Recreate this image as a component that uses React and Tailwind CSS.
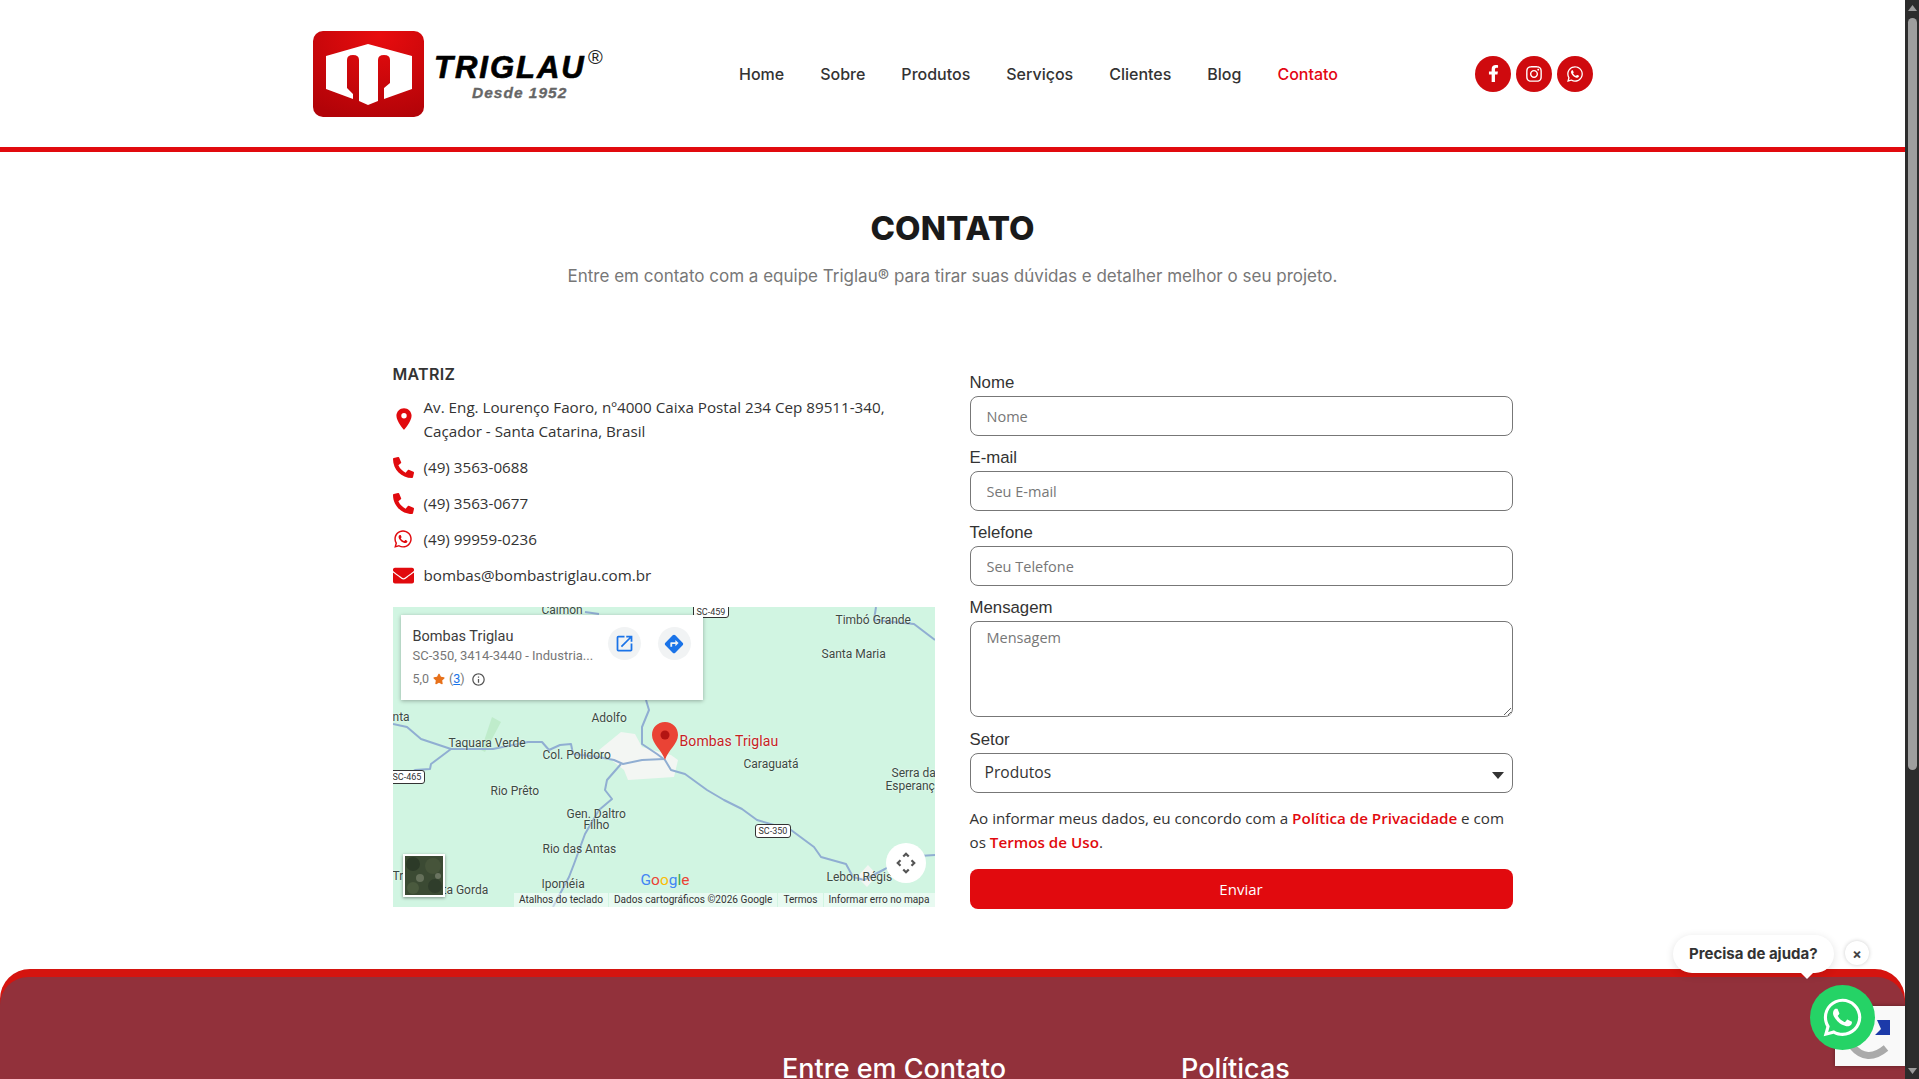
import React from 'react'
import { FaFacebookF, FaInstagram, FaWhatsapp, FaPhoneAlt, FaEnvelope, FaStar } from 'react-icons/fa'
import { MdOutlineOpenInNew, MdDirections, MdInfoOutline, MdPlace } from 'react-icons/md'

const nav = ['Home', 'Sobre', 'Produtos', 'Serviços', 'Clientes', 'Blog']

const fields = [
    { label: 'Nome', placeholder: 'Nome' },
    { label: 'E-mail', placeholder: 'Seu E-mail' },
    { label: 'Telefone', placeholder: 'Seu Telefone' },
]

const mapLabels = [
    { text: 'Calmon', x: 149, y: -3 },
    { text: 'Timbó Grande', x: 443, y: 7 },
    { text: 'Santa Maria', x: 429, y: 41 },
    { text: 'nta', x: 0, y: 104 },
    { text: 'Adolfo', x: 199, y: 105 },
    { text: 'Taquara Verde', x: 56, y: 130 },
    { text: 'Col. Polidoro', x: 150, y: 142 },
    { text: 'Caraguatá', x: 351, y: 151 },
    { text: 'Serra da', x: 499, y: 160 },
    { text: 'Esperanç', x: 493, y: 173 },
    { text: 'Rio Prêto', x: 98, y: 178 },
    { text: 'Gen. Daltro', x: 174, y: 201 },
    { text: 'Filho', x: 191, y: 212 },
    { text: 'Rio das Antas', x: 150, y: 236 },
    { text: 'Tr', x: 0, y: 263 },
    { text: 'Lebon Régis', x: 434, y: 264 },
    { text: 'Ipoméia', x: 149, y: 271 },
    { text: 'ta Gorda', x: 50, y: 277 },
]

function Logo() {
    return (
        <div className="flex items-center">
            <svg width="111" height="86" viewBox="0 0 111 86" className="shrink-0">
                <defs>
                    <radialGradient id="logoRed" cx="0.6" cy="0.05" r="1">
                        <stop offset="0" stopColor="#e80c0e" />
                        <stop offset="1" stopColor="#b20308" />
                    </radialGradient>
                </defs>
                <rect width="111" height="86" rx="10" fill="url(#logoRed)" />
                <path d="M13 25 L55 13 L99 25 L99 58 L71 68 L71 57 L77 52 L77 29 Q77 24 71 24 Q65 24 65 29 L65 70 L55 74 L46 70 L46 29 Q46 24 40 24 Q34 24 34 29 L34 57 L40 63 L40 68 L13 58 Z" fill="#fff" />
            </svg>
            <div className="relative ml-[11px] w-[180px] h-[86px]">
                <span className="absolute left-[-1px] top-[19px] font-['Liberation_Sans',sans-serif] font-bold italic text-[31px] leading-[36px] tracking-[2px] text-black [-webkit-text-stroke:0.7px_#000]">TRIGLAU</span>
                <span className="absolute left-[153px] top-[15px] font-['Liberation_Sans',sans-serif] text-[20px] leading-[22px] text-[#222]">®</span>
                <span className="absolute left-[37px] top-[53px] font-['Liberation_Sans',sans-serif] font-bold italic text-[15.5px] leading-[18px] tracking-[1px] text-[#666] [-webkit-text-stroke:0.3px_#666]">Desde 1952</span>
            </div>
        </div>
    )
}

function Header() {
    return (
        <header className="h-[152px] border-b-[5px] border-[#e10a0e] bg-white">
            <div className="ml-[313px] w-[1280px] flex items-center h-[147px]">
                <Logo />
                <nav className="flex items-center gap-[36px] ml-[124px] font-['Inter',sans-serif] text-[16px] font-medium text-[#333]">
                    {nav.map((n) => <a key={n}>{n}</a>)}
                    <a className="text-[#e30613]">Contato</a>
                </nav>
                <div className="flex gap-[5px] ml-auto">
                    <span className="w-9 h-9 rounded-full bg-[#cf0a0e] flex items-center justify-center text-white"><FaFacebookF size={17} /></span>
                    <span className="w-9 h-9 rounded-full bg-[#cf0a0e] flex items-center justify-center text-white"><FaInstagram size={18} /></span>
                    <span className="w-9 h-9 rounded-full bg-[#cf0a0e] flex items-center justify-center text-white"><FaWhatsapp size={18} /></span>
                </div>
            </div>
        </header>
    )
}

function ContactRow({ icon, children }) {
    return (
        <div className="flex items-center">
            <span className="w-[31px] shrink-0 text-[#e10a0e]">{icon}</span>
            <p className="leading-6">{children}</p>
        </div>
    )
}

function MapEmbed() {
    return (
        <div className="relative w-[542px] h-[300px] bg-[#d1f5e2] overflow-hidden font-['Roboto',sans-serif]">
            <svg width="542" height="300" viewBox="0 0 542 300" className="absolute inset-0">
                <path d="M88 143 L99 110 L108 115 L92 145 Z" fill="#bfeccb" />
                <path d="M206 143 L228 125 L242 127 L249 140 L278 148 L285 153 L281 170 L235 173 L231 163 Z" fill="#f3f6f3" />
                <path d="M464 270 L475 258 L484 268 L474 280 Z" fill="#f3f6f3" />
                <g fill="none" stroke="#90aed2" strokeWidth="2" strokeLinejoin="round">
                    <path d="M0 117 L14 120 L28 132 L46 138 L58 142 L38 157 L37 162 L22 163 L10 170" />
                    <path d="M58 142 L100 142 L135 135 L149 135 L156 143 L167 138 L178 137 L180 147 L206 150 L221 153 L230 157 L249 153 L271 152" />
                    <path d="M228 157 L214 173 L212 183 L219 192 L206 203 L192 227 L181 257 L176 270 L160 300" />
                    <path d="M253 93 L256 103 L249 120 L249 137 L264 147 L272 153 L278 163 L292 167 L314 183 L331 193 L349 202 L364 213 L398 223 L421 240 L428 250 L453 257 L460 270" />
                    <path d="M460 270 L471 273 L492 262 L510 250 L542 248" />
                    <path d="M483 0 L481 13 L521 17 L542 33" />
                    <path d="M192 5 L206 7" />
                </g>
            </svg>

            {mapLabels.map((l) => (
                <span key={l.text} className="absolute text-[12px] leading-[13px] text-[#3c4a43] whitespace-nowrap [text-shadow:0_0_2px_#fff]" style={{ left: l.x, top: l.y }}>{l.text}</span>
            ))}
            <span className="absolute left-[-4px] top-[163px] h-[14px] px-[3px] rounded-[3px] border border-[#333] bg-white text-[9px] leading-[12px] text-[#333]">SC-465</span>
            <span className="absolute left-[362px] top-[217px] h-[14px] px-[3px] rounded-[3px] border border-[#333] bg-white text-[9px] leading-[12px] text-[#333]">SC-350</span>
            <span className="absolute left-[300px] top-[-3px] h-[14px] px-[3px] rounded-[3px] border border-[#333] bg-white text-[9px] leading-[14px] text-[#333]">SC-459</span>

            {/* pin */}
            <svg width="26" height="38" viewBox="0 0 26 38" className="absolute left-[259px] top-[115px]">
                <path d="M13 0 C5.5 0 0 5.5 0 13 C0 22 10 28 13 38 C16 28 26 22 26 13 C26 5.5 20.5 0 13 0 Z" fill="#ea4335" />
                <circle cx="13" cy="13" r="4.5" fill="#b31412" />
            </svg>
            <span className="absolute left-[287px] top-[126px] text-[14px] leading-[16px] tracking-[0.1px] text-[#c5221f] [text-shadow:0_0_2px_#fff]">Bombas Triglau</span>

            {/* place card */}
            <div className="absolute left-2 top-2 w-[302px] h-[85px] bg-white shadow-[0_1px_4px_rgba(0,0,0,0.3)] pl-3 pt-[13px]">
                <p className="text-[14.5px] leading-[18px] font-normal text-[#3c3c3c]">Bombas Triglau</p>
                <p className="text-[13px] leading-[16px] mt-[2px] text-[#777]">SC-350, 3414-3440 - Industria...</p>
                <div className="flex items-center mt-[7px] text-[12.5px] leading-[16px] text-[#777]">
                    5,0 <FaStar size={12} className="text-[#e7711b] mx-[4px]" /> (<span className="text-[#1a73e8] underline">3</span>)
                    <MdInfoOutline size={15} className="text-[#555] ml-[6px]" />
                </div>
                <span className="absolute left-[207px] top-[12px] w-[33px] h-[33px] rounded-full bg-[#f1f3f4] flex items-center justify-center text-[#1a73e8]"><MdOutlineOpenInNew size={21} /></span>
                <span className="absolute left-[257px] top-[12px] w-[33px] h-[33px] rounded-full bg-[#f1f3f4] flex items-center justify-center text-[#1a73e8]"><MdDirections size={22} /></span>
            </div>

            {/* satellite thumb */}
            <div className="absolute left-[10px] top-[247px] w-[42px] h-[43px] border-2 border-white bg-[#3b4a33] shadow-[0_1px_3px_rgba(0,0,0,0.4)] overflow-hidden">
                <svg width="38" height="39" viewBox="0 0 38 39">
                    <circle cx="8" cy="8" r="7" fill="#2c3a28" />
                    <circle cx="28" cy="10" r="8" fill="#46543a" />
                    <circle cx="15" cy="22" r="4" fill="#65705a" />
                    <circle cx="30" cy="30" r="7" fill="#2f3d2b" />
                    <circle cx="8" cy="32" r="6" fill="#4a5a3e" />
                    <circle cx="33" cy="20" r="3" fill="#6a7460" />
                </svg>
            </div>

            {/* expand */}
            <div className="absolute left-[493px] top-[236px] w-10 h-10 rounded-full bg-white flex items-center justify-center">
                <svg width="20" height="22" viewBox="0 0 20 24" fill="none" stroke="#555" strokeWidth="2.4">
                    <path d="M7 5 L10 2 L13 5" /><path d="M7 19 L10 22 L13 19" /><path d="M4 9 L1 12 L4 15" /><path d="M16 9 L19 12 L16 15" />
                </svg>
            </div>

            <span className="absolute left-[248px] top-[264px] text-[15.5px] leading-[18px] text-[#4285f4]">G<span className="text-[#ea4335]">o</span><span className="text-[#fbbc05]">o</span>g<span className="text-[#34a853]">l</span><span className="text-[#ea4335]">e</span></span>

            <div className="absolute right-0 bottom-0 h-[14px] flex items-center gap-px text-[10.1px] leading-[14px] text-[#333] whitespace-nowrap">
                <span className="px-[5px] bg-white/50">Atalhos do teclado</span>
                <span className="px-[5px] bg-white/50">Dados cartográficos ©2026 Google</span>
                <span className="px-[5px] bg-white/50">Termos</span>
                <span className="px-[5px] bg-white/50">Informar erro no mapa</span>
            </div>
        </div>
    )
}

function Field({ label, children }) {
    return (
        <div>
            <label className="block pb-[2px] font-['Liberation_Sans',sans-serif] text-[16.8px] leading-[23px] text-[#333]">{label}</label>
            {children}
        </div>
    )
}

function ContactForm() {
    return (
        <form className="w-[543px] pt-[9px] font-['Open_Sans',sans-serif]">
            <div className="flex flex-col gap-[10px]">
                {fields.map((f) => (
                    <Field key={f.label} label={f.label}>
                        <input placeholder={f.placeholder} className="block w-full h-10 px-4 rounded-lg border border-[#777] bg-white text-[14.5px] text-[#555] placeholder:text-[#777] outline-none" />
                    </Field>
                ))}
                <Field label="Mensagem">
                    <textarea placeholder="Mensagem" className="block w-full h-[96px] px-4 py-[5px] rounded-lg border border-[#777] bg-white text-[14.5px] placeholder:text-[#777] outline-none" />
                </Field>
                <div className="mt-px">
                    <Field label="Setor">
                        <div className="relative h-10 px-[14px] rounded-lg border border-[#777] flex items-center text-[15.6px] text-[#333]">
                            Produtos
                            <svg width="12" height="7" viewBox="0 0 12 7" className="absolute right-[8px] top-[18px]"><path d="M0 0 H12 L6 7 Z" fill="#333" /></svg>
                        </div>
                    </Field>
                </div>
            </div>
            <p className="mt-[13px] text-[15.2px] leading-6 text-[#333]">
                Ao informar meus dados, eu concordo com a <b className="font-semibold text-[#e10a0e]">Política de Privacidade</b> e com os <b className="font-semibold text-[#e10a0e]">Termos de Uso</b>.
            </p>
            <button type="button" className="block w-full h-10 mt-[15px] rounded-lg bg-[#e10a0e] text-white text-[15px]">Enviar</button>
        </form>
    )
}

function Footer() {
    return (
        <footer className="relative mt-[60px] h-[200px] rounded-t-[30px] bg-[#d5140f] pt-2">
            <div className="h-full rounded-t-[28px] bg-[#92313b] text-white font-['Inter',sans-serif] text-[27px] font-medium">
                <div className="flex pt-[76px]">
                    <h4 className="ml-[782px] w-[399px] leading-[32px] whitespace-nowrap">Entre em Contato</h4>
                    <h4 className="leading-[32px]">Políticas</h4>
                </div>
            </div>
        </footer>
    )
}

function Scrollbar() {
    return (
        <div className="relative w-[14px] h-full shrink-0 bg-[#2c2c2c]">
            <svg width="14" height="17" viewBox="0 0 14 17" className="absolute top-0 left-0"><path d="M3 11 L7.5 5 L12 11 Z" fill="#9b9b9b" /></svg>
            <div className="absolute left-[3px] top-[18px] w-[9px] h-[752px] rounded-full bg-[#9e9e9e]" />
            <svg width="14" height="17" viewBox="0 0 14 17" className="absolute bottom-0 left-0"><path d="M3 6 L7.5 12 L12 6 Z" fill="#9b9b9b" /></svg>
        </div>
    )
}

export default function App() {
    return (
        <div className="relative flex h-screen overflow-hidden bg-white">
            <div className="flex-1 min-w-0 overflow-hidden">
                <Header />
                <main className="font-['Open_Sans',sans-serif] text-[#333]">
                    <div className="text-center pt-[53px]">
                        <h1 className="font-['Inter',sans-serif] font-extrabold text-[33px] leading-[46px] text-[#1a1a1a]">CONTATO</h1>
                        <p className="mt-[13px] font-['Inter',sans-serif] text-[17px] leading-6 text-[#777]">Entre em contato com a equipe Triglau® para tirar suas dúvidas e detalher melhor o seu projeto.</p>
                    </div>
                    <div className="w-[1120px] mx-auto flex gap-[35px] mt-[74px]">
                        <div className="w-[542px]">
                            <h3 className="font-['Inter',sans-serif] font-semibold text-[16px] tracking-[0.3px] leading-6 text-[#333]">MATRIZ</h3>
                            <div className="flex flex-col gap-[12px] mt-[9px] text-[15.2px] text-[#333] mb-[20px]">
                                <ContactRow icon={<MdPlace size={26} className="-ml-[2px]" />}>Av. Eng. Lourenço Faoro, nº4000 Caixa Postal 234 Cep 89511-340, Caçador - Santa Catarina, Brasil</ContactRow>
                                <ContactRow icon={<FaPhoneAlt size={21} />}>(49) 3563-0688</ContactRow>
                                <ContactRow icon={<FaPhoneAlt size={21} />}>(49) 3563-0677</ContactRow>
                                <ContactRow icon={<FaWhatsapp size={20} />}>(49) 99959-0236</ContactRow>
                                <ContactRow icon={<FaEnvelope size={21} />}>bombas@bombastriglau.com.br</ContactRow>
                            </div>
                            <MapEmbed />
                        </div>
                        <ContactForm />
                    </div>
                    <Footer />
                </main>
            </div>
            <Scrollbar />

            {/* recaptcha badge */}
            <div className="absolute left-[1835px] top-[1006px] w-[70px] h-[60px] bg-[#f9f9f9] shadow-[0_0_4px_rgba(0,0,0,0.4)] overflow-hidden">
                <svg width="70" height="60" viewBox="0 0 70 60" className="absolute left-0 top-0">
                    <path d="M42 14 L55 14 L55 29 L40 29 L46 23 Z" fill="#1c3aa9" />
                    <path d="M17 40 Q32 58 51 42" fill="none" stroke="#aaa" strokeWidth="7" />
                </svg>
            </div>

            {/* whatsapp widget */}
            <div className="absolute left-[1810px] top-[985px] w-[65px] h-[65px] rounded-full bg-[#25d366] flex items-center justify-center text-white">
                <FaWhatsapp size={43} />
            </div>
            <div className="absolute left-[1673px] top-[935px] h-[38px] px-4 rounded-[20px] bg-white shadow-[0_2px_8px_rgba(0,0,0,0.12)] flex items-center font-['Inter',sans-serif] font-bold text-[15px] text-[#333]">
                Precisa de ajuda?
                <span className="absolute left-[127px] top-[37px] w-[14px] h-[9px] overflow-hidden"><span className="block w-[10px] h-[10px] bg-white rotate-45 -mt-[5px] ml-[2px]" /></span>
            </div>
            <div className="absolute left-[1845px] top-[941px] w-[24px] h-[24px] rounded-full bg-white shadow-[0_0_4px_rgba(0,0,0,0.2)] flex items-center justify-center text-[#444] text-[14px] font-bold font-['Inter',sans-serif]">×</div>
        </div>
    )
}
